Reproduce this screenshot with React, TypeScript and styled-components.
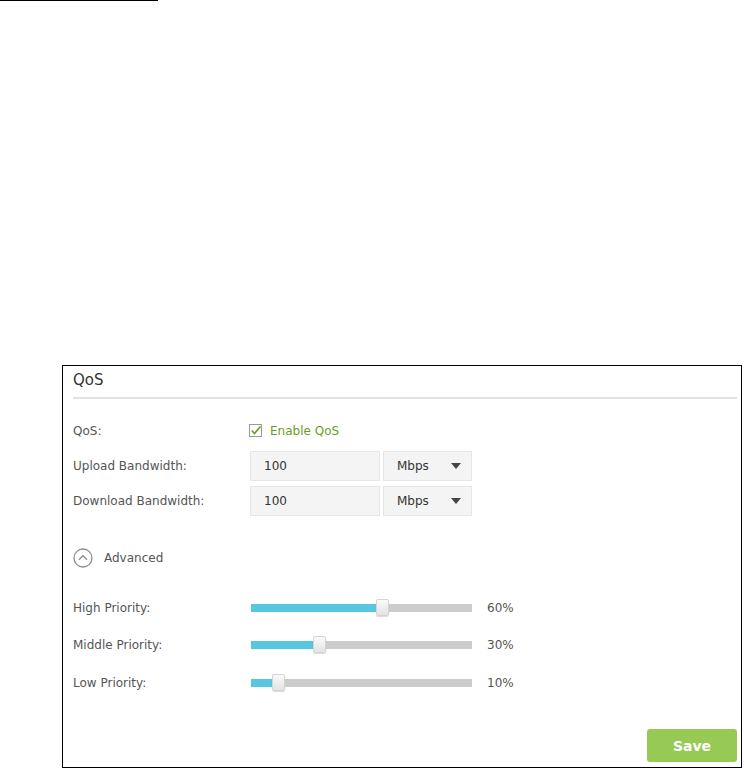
import React from "react";
import styled, { createGlobalStyle } from "styled-components";

const Global = createGlobalStyle`
  html, body { margin: 0; padding: 0; background: #fff; }
  body { font-family: "DejaVu Sans", Verdana, sans-serif; }
`;

const Page = styled.div`
  width: 744px;
  height: 770px;
  position: relative;
  display: flex;
  flex-direction: column;
`;

const TopRule = styled.div`
  width: 158px;
  height: 1px;
  background: #000;
`;

const Panel = styled.div`
  margin: 364px 0 0 62px;
  width: 680px;
  height: 403px;
  box-sizing: border-box;
  border: 1px solid #000;
  padding: 0 4px 5px 10px;
  display: flex;
  flex-direction: column;
`;

const Title = styled.div`
  padding-top: 3px;
  height: 28px;
  line-height: 22px;
  font-size: 15px;
  color: #333;
  font-family: "DejaVu Sans", Verdana, sans-serif;
  border-bottom: 2px solid #e3e3e3;
  box-sizing: content-box;
`;

const Row = styled.div<{ $mt: number; $h: number }>`
  display: flex;
  align-items: center;
  margin-top: ${(p) => p.$mt}px;
  height: ${(p) => p.$h}px;
`;

const Label = styled.div`
  width: 176px;
  flex: none;
  font-size: 12px;
  color: #555;
`;

const CheckWrap = styled.label`
  display: flex;
  align-items: center;
  gap: 7px;
  font-size: 12px;
  color: #6a9e1f;
`;

const Input = styled.div`
  width: 130px;
  height: 30px;
  box-sizing: border-box;
  background: #f4f4f4;
  border: 1px solid #e6e6e6;
  font-size: 12px;
  color: #333;
  padding-left: 13px;
  display: flex;
  align-items: center;
  margin-left: 1px;
`;

const Select = styled.div`
  width: 89px;
  height: 30px;
  box-sizing: border-box;
  background: #f4f4f4;
  border: 1px solid #e6e6e6;
  margin-left: 3px;
  font-size: 12px;
  color: #333;
  padding: 0 10px 0 13px;
  display: flex;
  align-items: center;
  justify-content: space-between;
`;

const Arrow = styled.span`
  width: 0;
  height: 0;
  border-left: 5px solid transparent;
  border-right: 5px solid transparent;
  border-top: 6px solid #444;
`;

const AdvancedToggle = styled.div`
  display: flex;
  align-items: center;
  gap: 11px;
  font-size: 12px;
  color: #555;
`;

const Track = styled.div`
  position: relative;
  width: 221px;
  height: 8px;
  margin-left: 2px;
  background: #cccccc;
`;

const Fill = styled.div`
  position: absolute;
  left: 0;
  top: 0;
  height: 100%;
  background: #56c6e1;
`;

const Handle = styled.div`
  position: absolute;
  top: -5px;
  width: 13px;
  height: 17px;
  box-sizing: border-box;
  border: 1px solid #d4d4d4;
  border-radius: 2px;
  background: linear-gradient(#fafafa, #e3e3e3);
  box-shadow: 0 1px 1px rgba(0, 0, 0, 0.15);
`;

const Pct = styled.div`
  margin-left: 15px;
  font-size: 12px;
  color: #555;
`;

const Footer = styled.div`
  margin-top: auto;
  display: flex;
  justify-content: flex-end;
`;

const SaveButton = styled.button`
  width: 90px;
  height: 33px;
  border: none;
  border-radius: 3px;
  background: #97c955;
  color: #fff;
  font-family: "DejaVu Sans", Verdana, sans-serif;
  font-weight: bold;
  font-size: 14px;
  cursor: pointer;
`;

const CheckIcon = () => (
  <svg width="14" height="14" viewBox="0 0 14 14">
    <rect x="0.5" y="0.5" width="12" height="12" fill="#fff" stroke="#9a9a9a" />
    <path d="M2.8 6.5 L5.5 9.5 L11.5 2.5" fill="none" stroke="#6a9e1f" strokeWidth="1.6" />
  </svg>
);

const CollapseIcon = () => (
  <svg width="20" height="20" viewBox="0 0 20 20">
    <circle cx="10" cy="10" r="9" fill="none" stroke="#8f8f8f" strokeWidth="1.3" />
    <path d="M6 11.8 L10 7.8 L14 11.8" fill="none" stroke="#8f8f8f" strokeWidth="1.4" />
  </svg>
);

const Slider = ({ value }: { value: number }) => {
  const left = (value / 100) * (221 - 13);
  return (
    <Track>
      <Fill style={{ width: left + 2 }} />
      <Handle style={{ left }} />
    </Track>
  );
};

const priorities = [
  { name: "High Priority:", value: 60, mt: 26 },
  { name: "Middle Priority:", value: 30, mt: 13 },
  { name: "Low Priority:", value: 10, mt: 14 },
];

export default function App() {
  return (
    <Page>
      <Global />
      <TopRule />
      <Panel>
        <Title>QoS</Title>
        <Row $mt={18} $h={28}>
          <Label>QoS:</Label>
          <CheckWrap>
            <CheckIcon />
            Enable QoS
          </CheckWrap>
        </Row>
        <Row $mt={6} $h={30}>
          <Label>Upload Bandwidth:</Label>
          <Input>100</Input>
          <Select>
            Mbps
            <Arrow />
          </Select>
        </Row>
        <Row $mt={5} $h={30}>
          <Label>Download Bandwidth:</Label>
          <Input>100</Input>
          <Select>
            Mbps
            <Arrow />
          </Select>
        </Row>
        <Row $mt={30} $h={24}>
          <AdvancedToggle>
            <CollapseIcon />
            Advanced
          </AdvancedToggle>
        </Row>
        {priorities.map((p) => (
          <Row key={p.name} $mt={p.mt} $h={24}>
            <Label>{p.name}</Label>
            <Slider value={p.value} />
            <Pct>{p.value}%</Pct>
          </Row>
        ))}
        <Footer>
          <SaveButton>Save</SaveButton>
        </Footer>
      </Panel>
    </Page>
  );
}
